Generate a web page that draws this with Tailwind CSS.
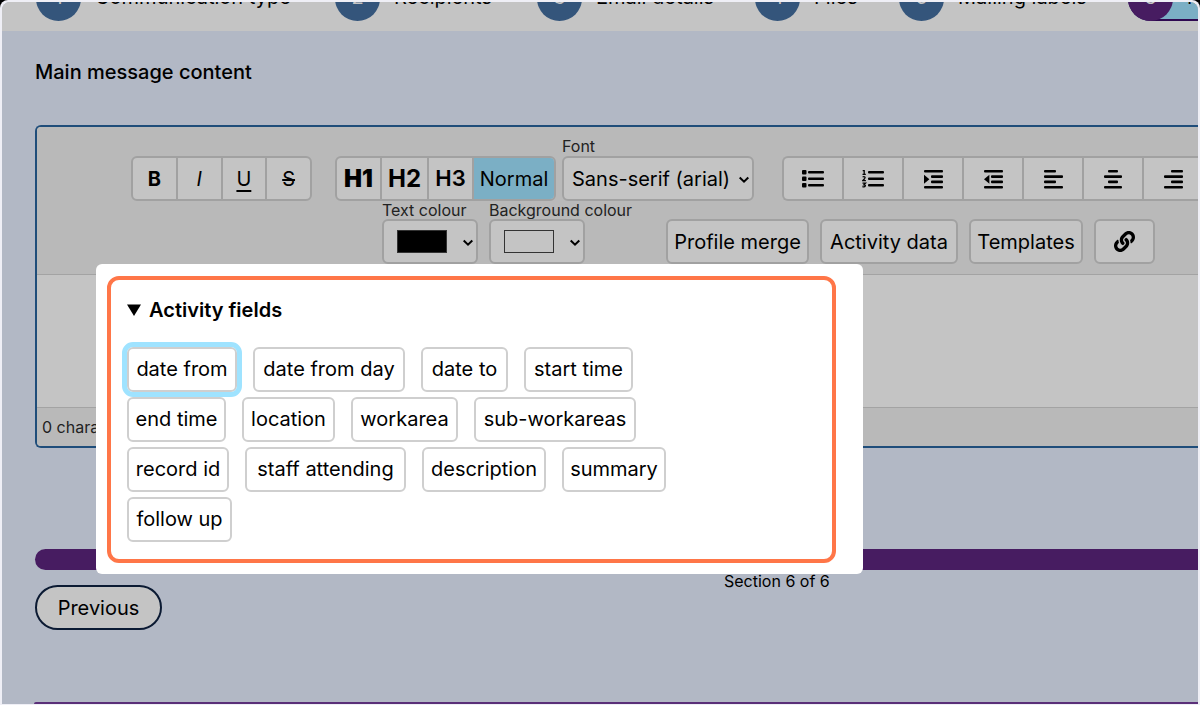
<!DOCTYPE html>
<html lang="en">
<head>
<meta charset="utf-8">
<title>Main message content</title>
<script src="https://cdn.jsdelivr.net/npm/@tailwindcss/browser@4"></script>
</head>
<body class="bg-black font-['Inter',sans-serif] text-black">
<div class="h-screen overflow-hidden rounded-t-lg bg-[#efeff6] px-0.5 pt-0.5 pb-px">
<div class="relative flex h-full flex-col overflow-hidden rounded-t-lg bg-[#b2b8c5]">

  <!-- Step navigation -->
  <nav class="flex h-[29px] shrink-0 items-end overflow-hidden bg-[#c4c4c4] pb-2.5 pl-[34px] text-xl whitespace-nowrap" aria-label="Steps">
    <a href="#" class="flex w-[299px] shrink-0 items-center gap-3.5"><span class="flex size-[45px] items-center justify-center rounded-full bg-[#34557b] pb-1 text-[#c4c4c4]">1</span><span class="pb-1">Communication type</span></a>
    <a href="#" class="flex w-[202px] shrink-0 items-center gap-3.5"><span class="flex size-[45px] items-center justify-center rounded-full bg-[#34557b] pb-1 text-[#c4c4c4]">2</span><span class="pb-1">Recipients</span></a>
    <a href="#" class="flex w-[218px] shrink-0 items-center gap-3.5"><span class="flex size-[45px] items-center justify-center rounded-full bg-[#34557b] pb-1 text-[#c4c4c4]">3</span><span class="pb-1">Email details</span></a>
    <a href="#" class="flex w-[144px] shrink-0 items-center gap-3.5"><span class="flex size-[45px] items-center justify-center rounded-full bg-[#34557b] pb-1 text-[#c4c4c4]">4</span><span class="pb-1">Files</span></a>
    <a href="#" class="flex w-[229px] shrink-0 items-center gap-3.5"><span class="flex size-[45px] items-center justify-center rounded-full bg-[#34557b] pb-1 text-[#c4c4c4]">5</span><span class="pb-1">Mailing labels</span></a>
    <a href="#" aria-current="step" class="flex shrink-0 items-center gap-3.5 rounded-full bg-[#7bafc5] pr-6 shadow-[inset_0_-2px_0_#2f0850]"><span class="flex size-[45px] items-center justify-center rounded-full bg-[#471c61] pb-1 text-[#c4c4c4]">6</span><span class="pb-1">Message</span></a>
  </nav>

  <main class="pt-[26px] pl-[33px]">
    <h1 class="text-xl leading-[30px] font-medium">Main message content</h1>

    <!-- Editor -->
    <section class="mt-[38px] rounded-l-md border-2 border-r-0 border-[#1f4d7a] bg-[#c4c4c4]">
      <div class="overflow-hidden rounded-tl border-b border-[#a3a3a3] bg-[#b9b9b9] pt-[9px] pb-2.5 whitespace-nowrap">
        <div class="flex items-end pl-[94px]">
          <div class="flex h-[45px] w-[181px] shrink-0 divide-x-2 divide-[#a1a1a1] overflow-hidden rounded-md border-2 border-[#a1a1a1] bg-[#c4c4c4] text-xl">
            <button class="flex-1 font-bold">B</button>
            <button class="flex-1 italic">I</button>
            <button class="flex-1 underline underline-offset-4">U</button>
            <button class="flex-1 line-through">S</button>
          </div>
          <div class="ml-[23px] flex h-[45px] shrink-0 divide-x-2 divide-[#a1a1a1] overflow-hidden rounded-md border-2 border-[#a1a1a1] bg-[#c4c4c4]">
            <button class="w-[45px] text-2xl font-black">H1</button>
            <button class="w-[47px] text-2xl font-bold">H2</button>
            <button class="w-[45px] text-[22px] font-semibold">H3</button>
            <button class="w-20 bg-[#7bafc5] text-xl">Normal</button>
          </div>
          <div class="ml-1.5 w-48 shrink-0">
            <label for="font" class="block text-base leading-5 text-[#222]">Font</label>
            <div class="relative">
              <select id="font" class="block h-[45px] w-full appearance-none rounded-md border-2 border-[#a1a1a1] bg-[#c4c4c4] pl-2 text-xl"><option>Sans-serif (arial)</option></select>
              <svg class="pointer-events-none absolute top-[19px] right-1 size-3" viewBox="0 0 12 12" fill="none" stroke="#000" stroke-width="2"><path d="M1.700 2.500 6 6.700l4.300-4.200"/></svg>
            </div>
          </div>
          <div class="ml-7 flex h-[45px] shrink-0 divide-x-2 divide-[#a1a1a1] overflow-hidden rounded-l-md border-2 border-r-0 border-[#a1a1a1] bg-[#c4c4c4]">
            <button aria-label="Bulleted list" class="flex w-15 items-center justify-center"><svg class="h-5 w-[22px]" viewBox="0 0 22 20" fill="#000"><rect x="0" y="1" width="4.500" height="4.500" rx="1"/><rect x="0" y="7.500" width="4.500" height="4.500" rx="1"/><rect x="0" y="14" width="4.500" height="4.500" rx="1"/><rect x="6" y="2" width="16" height="2.600" rx="1"/><rect x="6" y="8.500" width="16" height="2.600" rx="1"/><rect x="6" y="15" width="16" height="2.600" rx="1"/></svg></button>
            <button aria-label="Numbered list" class="flex w-15 items-center justify-center"><svg class="h-5 w-[22px]" viewBox="0 0 22 20" fill="#000"><g fill="none" stroke="#000" stroke-width="1.300"><path d="M.7 1.600h1.500v4M.5 5.400h3.300M.6 8c2-.9 3.300.3 1.700 2L.8 11.700h3.100M.5 14.200h3l-1.600 1.600c2.400 0 1.800 2.800-1.500 1.900"/></g><rect x="6" y="2" width="16" height="2.600" rx="1"/><rect x="6" y="8.500" width="16" height="2.600" rx="1"/><rect x="6" y="15" width="16" height="2.600" rx="1"/></svg></button>
            <button aria-label="Increase indent" class="flex w-15 items-center justify-center"><svg class="h-5 w-5" viewBox="0 0 20 20" fill="#000"><rect x="1" y="1" width="19" height="2.600" rx="1"/><rect x="8" y="6.300" width="12" height="2.600" rx="1"/><rect x="8" y="11.600" width="12" height="2.600" rx="1"/><rect x="1" y="16.900" width="19" height="2.600" rx="1"/><path d="M1 5.800v8.900l5.400-4.500z"/></svg></button>
            <button aria-label="Decrease indent" class="flex w-15 items-center justify-center"><svg class="h-5 w-5" viewBox="0 0 20 20" fill="#000"><rect x="1" y="1" width="19" height="2.600" rx="1"/><rect x="8" y="6.300" width="12" height="2.600" rx="1"/><rect x="8" y="11.600" width="12" height="2.600" rx="1"/><rect x="1" y="16.900" width="19" height="2.600" rx="1"/><path d="M6.400 5.800v8.900L1 10.200z"/></svg></button>
            <button aria-label="Align left" class="flex w-15 items-center justify-center"><svg class="h-5 w-5" viewBox="0 0 20 20" fill="#000"><rect x="1" y="1" width="12" height="2.600" rx="1"/><rect x="1" y="6.300" width="19" height="2.600" rx="1"/><rect x="1" y="11.600" width="12" height="2.600" rx="1"/><rect x="1" y="16.900" width="19" height="2.600" rx="1"/></svg></button>
            <button aria-label="Align centre" class="flex w-15 items-center justify-center"><svg class="h-5 w-5" viewBox="0 0 20 20" fill="#000"><rect x="5" y="1" width="10" height="2.600" rx="1"/><rect x="1" y="6.300" width="18" height="2.600" rx="1"/><rect x="5" y="11.600" width="10" height="2.600" rx="1"/><rect x="1" y="16.900" width="18" height="2.600" rx="1"/></svg></button>
            <button aria-label="Align right" class="flex w-15 items-center justify-center"><svg class="h-5 w-5" viewBox="0 0 20 20" fill="#000"><rect x="7" y="1" width="12" height="2.600" rx="1"/><rect x="0" y="6.300" width="19" height="2.600" rx="1"/><rect x="7" y="11.600" width="12" height="2.600" rx="1"/><rect x="0" y="16.900" width="19" height="2.600" rx="1"/></svg></button>
          </div>
        </div>
        <div class="flex items-end pl-[345px]">
          <div class="w-24 shrink-0">
            <label for="fg" class="block text-base leading-[18px] text-[#222]">Text colour</label>
            <div class="relative">
              <select id="fg" class="block h-[45px] w-full appearance-none rounded-md border-2 border-[#a1a1a1] bg-[#c4c4c4]"><option label=" " value="black"></option></select>
              <span class="pointer-events-none absolute top-[11px] left-[15px] h-[23px] w-[50px] border border-[#333] bg-black"></span>
              <svg class="pointer-events-none absolute top-[19px] right-1 size-3" viewBox="0 0 12 12" fill="none" stroke="#000" stroke-width="2"><path d="M1.700 2.500 6 6.700l4.300-4.200"/></svg>
            </div>
          </div>
          <div class="ml-[11px] w-24 shrink-0">
            <label for="bg" class="block text-base leading-[18px] text-[#222]">Background colour</label>
            <div class="relative">
              <select id="bg" class="block h-[45px] w-full appearance-none rounded-md border-2 border-[#a1a1a1] bg-[#c4c4c4]"><option label=" " value="white"></option></select>
              <span class="pointer-events-none absolute top-[11px] left-[15px] h-[23px] w-[50px] border border-[#333]"></span>
              <svg class="pointer-events-none absolute top-[19px] right-1 size-3" viewBox="0 0 12 12" fill="none" stroke="#000" stroke-width="2"><path d="M1.700 2.500 6 6.700l4.300-4.200"/></svg>
            </div>
          </div>
          <div class="ml-[81px] flex shrink-0 gap-[11px] text-xl">
            <button class="h-[45px] w-[143px] rounded-md border-2 border-[#a1a1a1] bg-[#c4c4c4]">Profile merge</button>
            <button class="h-[45px] w-[138px] rounded-md border-2 border-[#a1a1a1] bg-[#c4c4c4]">Activity data</button>
            <button class="h-[45px] w-[114px] rounded-md border-2 border-[#a1a1a1] bg-[#c4c4c4]">Templates</button>
            <button aria-label="Insert link" class="flex h-[45px] w-[61px] items-center justify-center rounded-md border-2 border-[#a1a1a1] bg-[#c4c4c4]"><svg class="size-[21px]" viewBox="0 0 512 512"><path d="M326.612 185.391c59.747 59.809 58.927 155.698.36 214.590-.110.120-.240.250-.360.370l-67.200 67.200c-59.270 59.270-155.699 59.262-214.960 0-59.270-59.260-59.270-155.700 0-214.960l37.106-37.106c9.840-9.840 26.786-3.300 27.294 10.606.648 17.722 3.826 35.527 9.690 52.721 1.986 5.822.567 12.262-3.783 16.612l-13.087 13.087c-28.026 28.026-28.905 73.660-1.155 101.960 28.024 28.579 74.086 28.749 102.325.510l67.200-67.190c28.191-28.191 28.073-73.757 0-101.830-3.701-3.694-7.429-6.564-10.341-8.569a16.037 16.037 0 0 1-6.947-12.606c-.396-10.567 3.348-21.456 11.698-29.806l21.054-21.055c5.521-5.521 14.182-6.199 20.584-1.731a152.482 152.482 0 0 1 20.522 17.197zM467.547 44.449c-59.261-59.262-155.690-59.270-214.960 0l-67.200 67.200c-.120.120-.250.250-.360.370-58.566 58.892-59.387 154.781.360 214.590a152.454 152.454 0 0 0 20.521 17.196c6.402 4.468 15.064 3.789 20.584-1.731l21.054-21.055c8.350-8.350 12.094-19.239 11.698-29.806a16.037 16.037 0 0 0-6.947-12.606c-2.912-2.005-6.640-4.875-10.341-8.569-28.073-28.073-28.191-73.639 0-101.830l67.200-67.190c28.239-28.239 74.300-28.069 102.325.510 27.750 28.300 26.872 73.934-1.155 101.960l-13.087 13.087c-4.350 4.350-5.769 10.790-3.783 16.612 5.864 17.194 9.042 34.999 9.690 52.721.509 13.906 17.454 20.446 27.294 10.606l37.106-37.106c59.271-59.259 59.271-155.699.001-214.959z"/></svg></button>
          </div>
        </div>
      </div>
      <div contenteditable="true" role="textbox" aria-label="Message" class="h-[132px]"></div>
      <div class="rounded-bl border-t border-[#a3a3a3] bg-[#b9b9b9] pl-[5px] text-base leading-[38px] text-[#222]">0 characters</div>
    </section>

    <!-- Section progress -->
    <div class="mt-[101px] h-[21px] rounded-l-full bg-[#471c61]"></div>
    <div class="flex items-start">
      <button class="mt-[15px] h-[45px] w-[127px] rounded-full border-2 border-[#0b1a33] bg-[#c4c4c4] text-xl">Previous</button>
      <p class="ml-[562px] pt-px text-base leading-5">Section 6 of 6</p>
    </div>
  </main>
  <div class="mt-auto ml-8 h-0.5 shrink-0 rounded-tl bg-[#5a2f78]"></div>

  <!-- Activity fields popup -->
  <div class="absolute top-[262px] left-[94px] w-[767px] rounded-md bg-white pt-3 pr-[27px] pb-[11px] pl-[11px]">
    <details open class="h-[287px] rounded-xl border-4 border-[#ff7648] px-4 pt-[15px]">
      <summary class="flex cursor-pointer list-none items-center gap-2 text-xl leading-[30px] font-semibold"><svg class="h-3 w-3.5" viewBox="0 0 14 12"><path d="M0 .5h14L7 12z"/></svg>Activity fields</summary>
      <div class="mt-[22px] flex flex-col gap-[5px] text-xl leading-[41px] whitespace-nowrap">
        <div class="flex gap-4">
          <button class="w-[110px] rounded-md border-2 border-[#cfcfcf] outline-[5px] outline-[#9fe3ff]">date from</button>
          <button class="w-[152px] rounded-md border-2 border-[#cfcfcf]">date from day</button>
          <button class="w-[87px] rounded-md border-2 border-[#cfcfcf]">date to</button>
          <button class="w-[109px] rounded-md border-2 border-[#cfcfcf]">start time</button>
        </div>
        <div class="flex gap-4">
          <button class="w-[99px] rounded-md border-2 border-[#cfcfcf]">end time</button>
          <button class="w-[93px] rounded-md border-2 border-[#cfcfcf]">location</button>
          <button class="w-[107px] rounded-md border-2 border-[#cfcfcf]">workarea</button>
          <button class="w-[162px] rounded-md border-2 border-[#cfcfcf]">sub-workareas</button>
        </div>
        <div class="flex gap-4">
          <button class="w-[102px] rounded-md border-2 border-[#cfcfcf]">record id</button>
          <button class="w-[161px] rounded-md border-2 border-[#cfcfcf]">staff attending</button>
          <button class="w-[124px] rounded-md border-2 border-[#cfcfcf]">description</button>
          <button class="w-[104px] rounded-md border-2 border-[#cfcfcf]">summary</button>
        </div>
        <div class="flex gap-4">
          <button class="w-[105px] rounded-md border-2 border-[#cfcfcf]">follow up</button>
        </div>
      </div>
    </details>
  </div>
</div>
</div>
</body>
</html>
